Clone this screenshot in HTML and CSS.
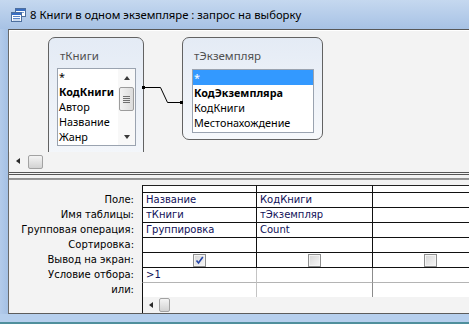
FILE: index.html
```html
<!DOCTYPE html>
<html>
<head>
<meta charset="utf-8">
<link rel="stylesheet" href="styles.css">
</head>
<body>
<div class="window">
  <div class="titlebar">
    <svg class="ticon" width="15" height="14" viewBox="0 0 15 14">
      <rect x="4.5" y="0.5" width="10" height="8" fill="#fff" stroke="#4d6f9e"/>
      <rect x="5" y="1" width="9" height="2" fill="#3a6fc4"/>
      <line x1="6" y1="4.5" x2="13" y2="4.5" stroke="#7ea3d8"/>
      <rect x="0.5" y="4.5" width="10" height="9" fill="#fff" stroke="#4d6f9e"/>
      <rect x="1" y="5" width="9" height="2" fill="#3a6fc4"/>
      <line x1="2" y1="8.5" x2="9" y2="8.5" stroke="#5b86c8"/>
      <line x1="2" y1="10.5" x2="9" y2="10.5" stroke="#5b86c8"/>
      <line x1="2" y1="12" x2="9" y2="12" stroke="#9ab8e2"/>
    </svg>
    <span class="title">8 Книги в одном экземпляре : запрос на выборку</span>
  </div>
  <div class="main">
    <div class="frame-left"></div>
    <div class="content">
      <div class="diagram">
        <div class="tbox tbooks">
          <div class="tb-title">тКниги</div>
          <div class="tb-list">
            <div class="tb-rows">
              <div class="row">*</div>
              <div class="row key">КодКниги</div>
              <div class="row">Автор</div>
              <div class="row">Название</div>
              <div class="row">Жанр</div>
            </div>
            <div class="vscroll">
              <span class="vbtn"><span class="tri-up"></span></span>
              <span class="vthumb"><i></i><i></i><i></i><i></i></span>
              <span class="vspace"></span>
              <span class="vbtn"><span class="tri-down"></span></span>
            </div>
          </div>
        </div>
        <div class="tbox tcopies">
          <div class="tb-title">тЭкземпляр</div>
          <div class="tb-list">
            <div class="tb-rows">
              <div class="row sel">*</div>
              <div class="row key">КодЭкземпляра</div>
              <div class="row">КодКниги</div>
              <div class="row">Местонахождение</div>
            </div>
          </div>
        </div>
        <svg class="rel" width="460" height="122">
          <polyline points="134,57.5 151.5,57.5 158.5,72.5 173,72.5" fill="none" stroke="#000" stroke-width="1"/>
          <rect x="133" y="56" width="3" height="3" fill="#000"/>
          <rect x="171" y="71" width="3" height="3" fill="#000"/>
        </svg>
      </div>
      <div class="hscroll">
        <span class="tri-left"></span>
        <span class="hthumb"></span>
      </div>
      <div class="splitter"></div>
      <div class="qbe">
        <div class="lbl"></div>
        <div class="cell top first"></div>
        <div class="cell top"></div>
        <div class="cell top"></div>

        <div class="lbl">Поле:</div>
        <div class="cell first">Название</div>
        <div class="cell">КодКниги</div>
        <div class="cell"></div>

        <div class="lbl">Имя таблицы:</div>
        <div class="cell first">тКниги</div>
        <div class="cell">тЭкземпляр</div>
        <div class="cell"></div>

        <div class="lbl">Групповая операция:</div>
        <div class="cell first">Группировка</div>
        <div class="cell">Count</div>
        <div class="cell"></div>

        <div class="lbl">Сортировка:</div>
        <div class="cell first"></div>
        <div class="cell"></div>
        <div class="cell"></div>

        <div class="lbl">Вывод на экран:</div>
        <div class="cell first chk"><span class="cb on"><svg width="9" height="9" viewBox="0 0 9 9"><path d="M1.5 4.5 L3.5 7 L7.8 1" fill="none" stroke="#2747a8" stroke-width="1.6"/></svg></span></div>
        <div class="cell chk"><span class="cb"></span></div>
        <div class="cell chk"><span class="cb"></span></div>

        <div class="lbl">Условие отбора:</div>
        <div class="cell first lite">&gt;1</div>
        <div class="cell lite"></div>
        <div class="cell lite"></div>

        <div class="lbl">или:</div>
        <div class="cell first lite last"></div>
        <div class="cell lite last"></div>
        <div class="cell lite last"></div>
      </div>
      <div class="lscroll">
        <div class="ltrack">
          <span class="tri-left"></span>
          <span class="lthumb"></span>
        </div>
      </div>
    </div>
  </div>
  <div class="frame-bottom"></div>
</div>
</body>
</html>
```

FILE: styles.css
```css
* { box-sizing: border-box; }
html, body { margin: 0; padding: 0; }
body {
  width: 469px;
  height: 324px;
  overflow: hidden;
  background: #a9c4e6;
  font-family: "Noto Sans", sans-serif;
}
.window {
  width: 469px;
  height: 324px;
  display: flex;
  flex-direction: column;
}
.titlebar {
  height: 29px;
  flex: none;
  display: flex;
  align-items: center;
  padding-left: 11px;
  gap: 4px;
  background: linear-gradient(#c5d8ef, #a7c2e5);
}
.ticon { flex: none; margin-top: 1px; }
.title {
  font-size: 11.3px;
  color: #000;
  white-space: nowrap;
}
.main {
  height: 285px;
  flex: none;
  display: flex;
}
.frame-left {
  width: 8px;
  flex: none;
  background: linear-gradient(90deg, #b3cbea, #a4c0e4);
}
.content {
  flex: 1;
  min-width: 0;
  display: flex;
  flex-direction: column;
  background: #f3f3f3;
  border-top: 1px solid #585858;
  border-left: 1px solid #6a6a6a;
  border-bottom: 1px solid #5c5c5c;
  overflow: hidden;
}
.frame-bottom {
  height: 10px;
  flex: none;
  background: linear-gradient(#b6cfed 0, #b6cfed 8px, #4f8f9c 8px);
}

/* diagram */
.diagram {
  height: 122px;
  flex: none;
  position: relative;
  overflow: hidden;
  box-shadow: inset 1px 1px 0 #ffffff;
}
.tbox {
  position: absolute;
  top: 7px;
  border: 1px solid #626262;
  border-radius: 7px;
  background: linear-gradient(#e4ebf5, #f6f8fb);
  padding: 0 8px 0 8px;
}
.tbooks { left: 39px; width: 96px; height: 140px; }
.tcopies { left: 173px; width: 141px; height: 103px; }
.tb-title {
  padding: 11px 0 0 3px;
  height: 30px;
  line-height: 14px;
  font-size: 11.5px;
  color: #505050;
}
.tb-list {
  display: flex;
  border: 1px solid #9aa3b0;
  background: #fff;
}
.tbooks .tb-list { height: 78px; width: 79px; }
.tcopies .tb-list { height: 64px; width: 122px; margin-left: 1px; margin-top: 1px; }
.tb-rows { flex: 1; min-width: 0; overflow: hidden; }
.row {
  height: 15px;
  line-height: 15px;
  padding-left: 1px;
  font-size: 10.8px;
  color: #000;
  white-space: nowrap;
}
.row.key { font-weight: 700; }
.row.sel { background: #3399ff; color: #fff; }
.vscroll {
  width: 17px;
  flex: none;
  display: flex;
  flex-direction: column;
  align-items: center;
  background: #f8f8f8;
}
.vbtn {
  height: 17px;
  width: 15px;
  display: flex;
  align-items: center;
  justify-content: center;
}
.tri-up { width: 0; height: 0; border-left: 3.5px solid transparent; border-right: 3.5px solid transparent; border-bottom: 4px solid #3a3a3a; }
.tri-down { width: 0; height: 0; border-left: 3.5px solid transparent; border-right: 3.5px solid transparent; border-top: 4px solid #3a3a3a; }
.vthumb {
  margin-top: 1px;
  width: 15px;
  height: 24px;
  border: 1px solid #9c9c9c;
  border-radius: 2px;
  background: linear-gradient(90deg, #f2f2f2, #dcdcdc);
  display: flex;
  flex-direction: column;
  align-items: center;
  justify-content: center;
  gap: 1px;
}
.vthumb i { display: block; width: 7px; height: 1px; background: #6f6f6f; }
.vspace { flex: 1; }
.rel { position: absolute; left: 0; top: 0; }

/* upper scroll */
.hscroll {
  height: 18px;
  flex: none;
  display: flex;
  align-items: center;
  padding-left: 7px;
}
.tri-left { width: 0; height: 0; border-top: 3.5px solid transparent; border-bottom: 3.5px solid transparent; border-right: 4px solid #2a2a2a; }
.hthumb {
  margin-left: 8px;
  margin-top: 1px;
  width: 15px;
  height: 14px;
  border: 1px solid #a2a2a2;
  border-radius: 2px;
  background: linear-gradient(#f4f4f4, #d2d2d2);
}

/* splitter */
.splitter {
  height: 15px;
  flex: none;
  background: linear-gradient(#f3f3f3 0, #f3f3f3 2px, #555 2px, #555 3px, #f3f3f3 3px, #f3f3f3 4px, #555 4px, #555 5px, #f3f3f3 5px, #f3f3f3 8px, #8e8e8e 8px, #9a9a9a 10px, #f3f3f3 10px);
}

/* QBE grid */
.qbe {
  height: 112px;
  flex: none;
  display: grid;
  grid-template-columns: 133px 115px 116px 115px;
  grid-template-rows: 8px repeat(6, 15px) 14px;
  font-family: "DejaVu Sans", sans-serif;
  font-size: 10px;
}
.lbl {
  text-align: right;
  padding-right: 8px;
  line-height: 14px;
  color: #000;
  white-space: nowrap;
}
.cell {
  background: #fff;
  border-right: 1px solid #111;
  border-bottom: 1px solid #111;
  padding-left: 3px;
  line-height: 14px;
  color: #101058;
  white-space: nowrap;
}
.cell.top { border-top: 1px solid #222; }
.cell.first { border-left: 1px solid #111; }
.cell.lite { border-bottom-color: #b4b4b4; border-right-color: #8c8c8c; }
.cell.first.lite { border-right-color: #c4c4c4; border-left-color: #111; }
.cell.last { border-bottom: none; }
.chk { display: flex; align-items: center; justify-content: center; padding-left: 0; }
.cb {
  width: 13px;
  height: 13px;
  border: 1px solid #8e8f8f;
  background: linear-gradient(135deg, #d6d6d6, #f7f7f7);
  box-shadow: inset 0 0 0 1px #f4f4f4;
  display: flex;
  align-items: center;
  justify-content: center;
}

/* lower scroll */
.lscroll {
  height: 16px;
  flex: none;
  padding-left: 133px;
  display: flex;
}
.ltrack {
  flex: 1;
  border-left: 1px solid #111;
  display: flex;
  align-items: center;
  padding-left: 6px;
}
.lthumb {
  margin-left: 6px;
  width: 11px;
  height: 14px;
  border: 1px solid #a2a2a2;
  border-radius: 2px;
  background: linear-gradient(#f4f4f4, #d2d2d2);
}
```
